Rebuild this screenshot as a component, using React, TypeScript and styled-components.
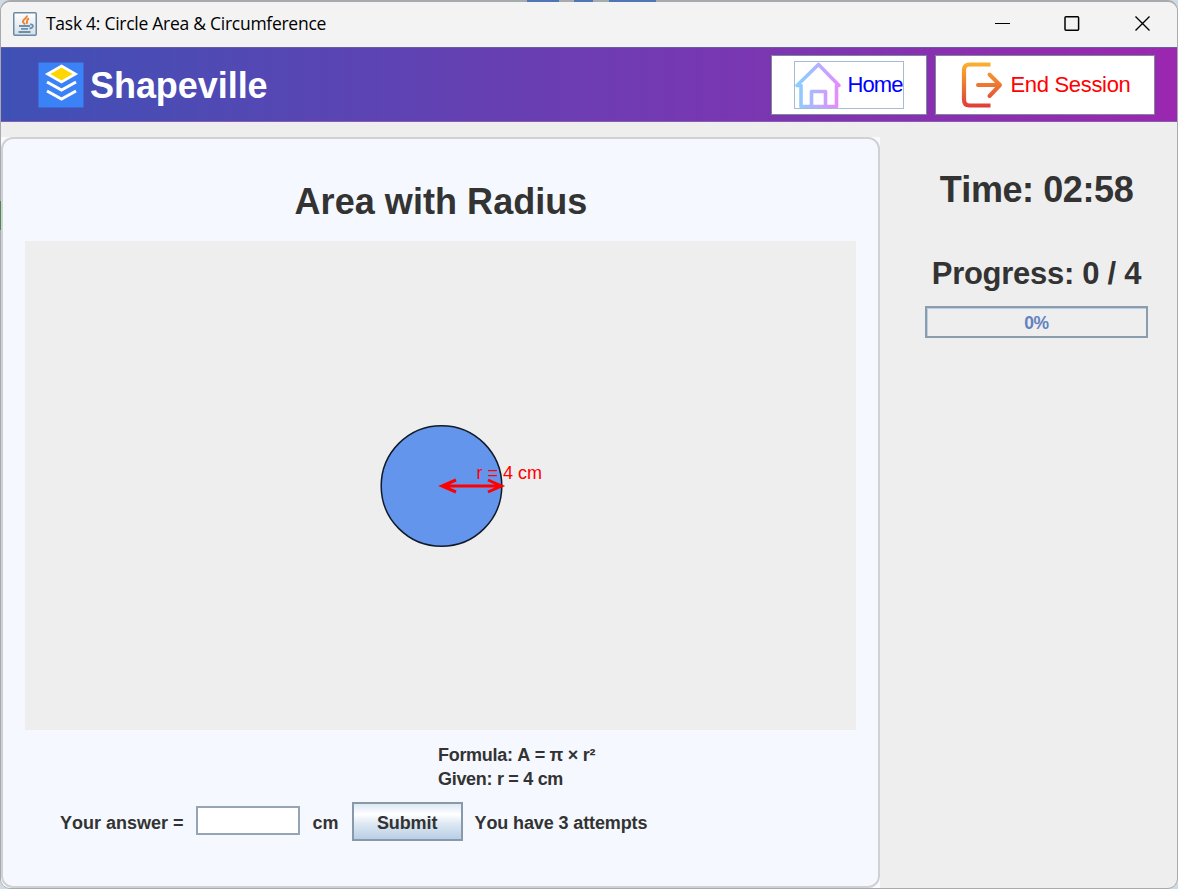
import React from 'react';
import styled, { createGlobalStyle } from 'styled-components';

const Global = createGlobalStyle`
  * { box-sizing: border-box; }
  html, body { margin: 0; padding: 0; }
  body {
    width: 1178px;
    height: 889px;
    overflow: hidden;
    background: #cfdae4;
    font-family: "Liberation Sans", Arial, sans-serif;
    font-kerning: none;
    color: #333;
  }
`;

const Frame = styled.div`
  width: 1178px;
  height: 889px;
  padding: 2px 1px 1px;
  border-radius: 11px;
  background:
    linear-gradient(#4f74b8, #4f74b8) 527px 0 / 32px 2px no-repeat,
    linear-gradient(#4f74b8, #4f74b8) 574px 0 / 19px 2px no-repeat,
    linear-gradient(#4f74b8, #4f74b8) 609px 0 / 47px 2px no-repeat,
    linear-gradient(#478a4b, #478a4b) 0 201px / 1px 29px no-repeat,
    #a7abae;
`;

const Window = styled.div`
  display: flex;
  flex-direction: column;
  height: 100%;
  border-radius: 9px;
  overflow: hidden;
  background: #eee;
`;

const TitleBar = styled.div`
  display: flex;
  align-items: center;
  flex: none;
  height: 45px;
  padding: 0 26px 2px 12px;
  background: #f3f3f3;
`;

const Title = styled.div`
  flex: 1;
  margin-left: 9px;
  padding-bottom: 2px;
  font-family: "Open Sans", "Noto Sans", sans-serif;
  font-size: 17.5px;
  letter-spacing: -0.27px;
  white-space: nowrap;
  color: #000;
`;

const WindowControls = styled.div`
  display: flex;
  gap: 53px;
`;

const Header = styled.header`
  display: flex;
  align-items: center;
  flex: none;
  height: 75px;
  padding: 0 22px 0 37px;
  background: linear-gradient(90deg, #3f51b5, #9c27b0);
  box-shadow: inset 0 1px #6c5d9c, inset 0 -1px #8a5cb0;
`;

const Brand = styled.div`
  display: flex;
  flex: 1;
  align-items: center;
  gap: 6px;
  font-size: 36px;
  line-height: 40px;
  font-weight: bold;
  letter-spacing: -0.05px;
  color: #fff;
  span { padding-top: 3px; }
`;

const HeaderButton = styled.button<{ $width: number; $color: string }>`
  display: flex;
  align-items: center;
  justify-content: center;
  width: ${(p) => p.$width}px;
  height: 60px;
  margin-left: 8px;
  padding: 0;
  border: 1px solid #7a8a99;
  background: #fff;
  color: ${(p) => p.$color};
  font: 22px "Liberation Sans", Arial, sans-serif;
  letter-spacing: ${(p) => (p.$color === '#f00' ? '-0.32px' : '-0.9px')};
`;

const FocusRing = styled.span<{ $focused?: boolean }>`
  display: flex;
  align-items: center;
  gap: ${(p) => (p.$focused ? 6 : 5)}px;
  height: 48px;
  border: 1px solid ${(p) => (p.$focused ? '#a9bccf' : 'transparent')};
`;

const Content = styled.main`
  display: flex;
  flex: 1;
  min-height: 0;
  padding-top: 15px;
`;

const CardArea = styled.div`
  width: 879px;
  flex: none;
  background: #f8fafd;
`;

const Card = styled.section`
  display: flex;
  flex-direction: column;
  height: 100%;
  padding: 0 22px 0;
  border: 2px solid #cfd1d4;
  border-radius: 12px;
  background: #f5f9ff;
`;

const Heading = styled.h1`
  margin: 0;
  height: 102px;
  padding: 42px 0 0 1px;
  text-align: center;
  font-size: 36px;
  line-height: 41px;
  letter-spacing: 0.05px;
`;

const Canvas = styled.div`
  height: 489px;
  background: #eee;
  svg { display: block; }
`;

const Formula = styled.div`
  width: 157px;
  margin: 13px auto 0 413px;
  font-size: 18px;
  font-weight: bold;
  line-height: 24px;
  letter-spacing: -0.3px;
  white-space: nowrap;
`;

const AnswerRow = styled.form`
  display: flex;
  align-items: center;
  margin: 11px 0 0 35px;
  height: 39px;
  font-size: 18px;
  font-weight: bold;
  white-space: nowrap;
  > label, > span { padding-top: 3px; }
`;

const AnswerInput = styled.input`
  width: 104px;
  height: 29px;
  margin: 0 13px 3px 12px;
  border: 2px solid #95a5b6;
  border-radius: 0;
  outline: none;
  background: #fff;
`;

const SubmitButton = styled.button`
  width: 111px;
  height: 39px;
  margin: 0 12px 0 13px;
  padding: 3px 0 0;
  border: 2px solid #8799ab;
  background: linear-gradient(#dde8f3, #fff 30%, #dfe9f3 55%, #b8cfe5);
  color: #333;
  font: bold 18px "Liberation Sans", Arial, sans-serif;
  letter-spacing: -0.1px;
`;

const Attempts = styled.span`
  letter-spacing: -0.12px;
`;

const Sidebar = styled.aside`
  display: flex;
  flex: 1;
  flex-direction: column;
  align-items: center;
  padding: 32px 0 0 16px;
`;

const Timer = styled.div`
  font-size: 36px;
  line-height: 42px;
  font-weight: bold;
  letter-spacing: -0.42px;
`;

const ProgressLabel = styled.div`
  margin-top: 44px;
  padding-top: 1px;
  font-size: 31px;
  line-height: 36px;
  font-weight: bold;
  letter-spacing: -0.28px;
`;

const ProgressBar = styled.div`
  width: 223px;
  height: 32px;
  margin-top: 14px;
  border: 2px solid #8b9cac;
  box-shadow: inset 1px 1px #b8cfe5;
  text-align: center;
  font-size: 17.5px;
  line-height: 30px;
  font-weight: bold;
  letter-spacing: -0.5px;
  color: #6382bf;
`;

const JavaIcon = () => (
  <svg width="24" height="24" viewBox="0 0 24 24" fill="none">
    <defs>
      <linearGradient id="javaTile" x1="0" y1="0" x2="0" y2="1">
        <stop offset="0" stopColor="#fff" />
        <stop offset="1" stopColor="#d4dfe8" />
      </linearGradient>
    </defs>
    <rect x="0.75" y="0.75" width="22.5" height="22.5" rx="1" fill="url(#javaTile)" stroke="#6b8ba4" strokeWidth="1.5" />
    <path d="M14 3.5c.5 2.5-5 4-4 6.5l2 2.5M16 6.5c-3.5 1.5-1 3-2.500 5.500" stroke="#ee8438" strokeWidth="2" />
    <path d="M6 14h11M8 16.8h7M5.500 20h12M17 12.500c4-.8 4 3.500-.5 4" stroke="#6b90ae" strokeWidth="1.8" />
  </svg>
);

const ShapevilleLogo = () => (
  <svg width="46" height="46" viewBox="0 0 46 46" fill="none">
    <rect x="0.5" y="0.5" width="45" height="45" fill="#3b82f6" />
    <path d="M23.5 4 37.5 12 23.5 20 9.5 12Z" fill="#ffd700" stroke="#fff" strokeWidth="2.6" />
    <path d="m9 20 14.500 8 14.500-8M9 29l14.500 8 14.500-8" stroke="#fff" strokeWidth="3" />
  </svg>
);

const HomeIcon = () => (
  <svg width="46" height="46" viewBox="0 0 46 46" fill="none">
    <defs>
      <linearGradient id="homeStroke" gradientUnits="userSpaceOnUse" x1="0" y1="24" x2="44" y2="28">
        <stop offset="0" stopColor="#83d4ff" />
        <stop offset="1" stopColor="#e58bff" />
      </linearGradient>
    </defs>
    <path
      d="M2 23.500H6V44.500H41.500V23.500H44L23.500 2.500 2 23.500M16.500 44V29.500h14V44"
      stroke="url(#homeStroke)"
      strokeWidth="3.6"
      strokeLinecap="round"
      strokeLinejoin="round"
    />
  </svg>
);

const ExitIcon = () => (
  <svg width="46" height="46" viewBox="0 0 46 46" fill="none">
    <defs>
      <linearGradient id="exitStroke" gradientUnits="userSpaceOnUse" x1="0" y1="0" x2="0" y2="46">
        <stop offset="0" stopColor="#fcb32e" />
        <stop offset="1" stopColor="#df3a38" />
      </linearGradient>
    </defs>
    <path
      d="M31.500 2.500H10.500Q5 2.500 5 8v29.500Q5 43.500 10.500 43.500H31.500"
      stroke="url(#exitStroke)"
      strokeWidth="4.2"
    />
    <path
      d="M19 23.010 41 23M30.500 12.500 41 23 30.500 34"
      stroke="url(#exitStroke)"
      strokeWidth="4"
      strokeLinecap="round"
      strokeLinejoin="round"
    />
  </svg>
);

const CircleDiagram = () => (
  <svg width="831" height="489" viewBox="0 0 831 489">
    <circle cx="416.500" cy="245" r="60.300" fill="#6495ed" stroke="#111a28" strokeWidth="1.5" />
    <path
      d="M416.500 245H476.500M431 239 417 245 431 251M463 239 476.500 245 463 251"
      fill="none"
      stroke="#f00"
      strokeWidth="3"
    />
    <text x="451.500" y="238" fill="#f00" fontSize="18">r = 4 cm</text>
  </svg>
);

export default function App() {
  return (
    <>
      <Global />
      <Frame>
        <Window>
          <TitleBar>
            <JavaIcon />
            <Title>Task 4: Circle Area &amp; Circumference</Title>
            <WindowControls>
              <svg width="17" height="17" viewBox="0 0 17 17"><path d="M1 8.500h15" stroke="#000" strokeWidth="1" /></svg>
              <svg width="17" height="17" viewBox="0 0 17 17" fill="none"><rect x="1" y="1.700" width="13.600" height="13.600" rx="1" stroke="#000" strokeWidth="1.5" /></svg>
              <svg width="17" height="17" viewBox="0 0 17 17"><path d="m1.500 1.500 14 14m0-14-14 14" stroke="#000" strokeWidth="1.4" /></svg>
            </WindowControls>
          </TitleBar>
          <Header>
            <Brand><ShapevilleLogo /><span>Shapeville</span></Brand>
            <HeaderButton $width={156} $color="#00f">
              <FocusRing $focused><HomeIcon /><span>Home</span></FocusRing>
            </HeaderButton>
            <HeaderButton $width={220} $color="#f00">
              <FocusRing><ExitIcon /><span>End Session</span></FocusRing>
            </HeaderButton>
          </Header>
          <Content>
            <CardArea>
              <Card>
                <Heading>Area with Radius</Heading>
                <Canvas><CircleDiagram /></Canvas>
                <Formula>
                  <div>Formula: A = π × r²</div>
                  <div>Given: r = 4 cm</div>
                </Formula>
                <AnswerRow onSubmit={(e) => e.preventDefault()}>
                  <label htmlFor="answer">Your answer =</label>
                  <AnswerInput id="answer" />
                  <span>cm</span>
                  <SubmitButton type="submit">Submit</SubmitButton>
                  <Attempts>You have 3 attempts</Attempts>
                </AnswerRow>
              </Card>
            </CardArea>
            <Sidebar>
              <Timer>Time: 02:58</Timer>
              <ProgressLabel>Progress: 0 / 4</ProgressLabel>
              <ProgressBar>0%</ProgressBar>
            </Sidebar>
          </Content>
        </Window>
      </Frame>
    </>
  );
}
